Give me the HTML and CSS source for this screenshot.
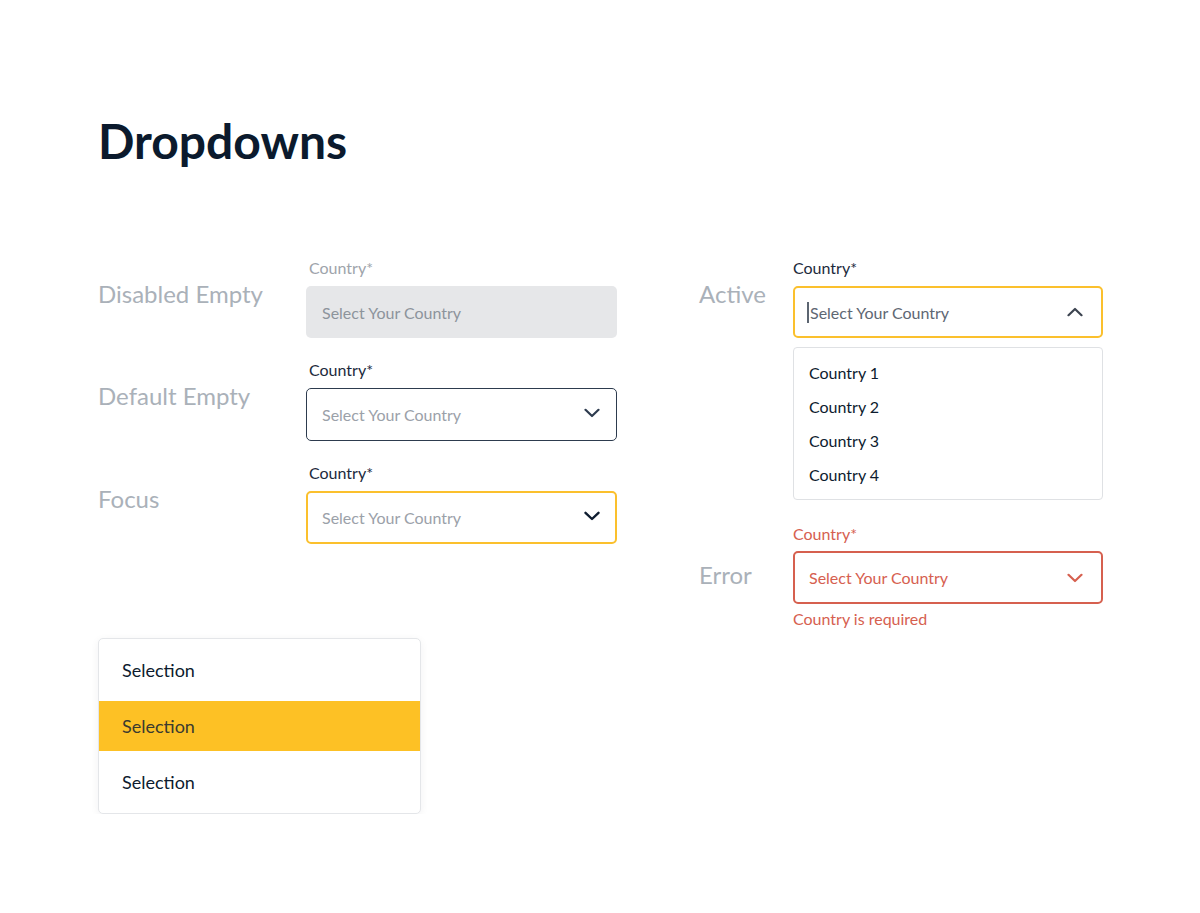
FILE: index.html
```html
<!DOCTYPE html>
<html lang="en">
<head>
<meta charset="utf-8">
<title>Dropdowns</title>
<link rel="stylesheet" href="styles.css">
</head>
<body>
<main class="page">
  <h1 class="title">Dropdowns</h1>
  <div class="columns">
    <section class="col col-left">
      <div class="row">
        <div class="row-label">Disabled Empty</div>
        <div class="field">
          <div class="field-label disabled">Country*</div>
          <div class="select select-disabled"><span class="ph">Select Your Country</span></div>
        </div>
      </div>
      <div class="row">
        <div class="row-label">Default Empty</div>
        <div class="field">
          <div class="field-label">Country*</div>
          <div class="select select-default">
            <span class="ph">Select Your Country</span>
            <svg class="chev" width="16" height="10" viewBox="0 0 16 10"><path d="M1.5 1.8 8 8 14.5 1.8" fill="none" stroke="#2d3b4e" stroke-width="2.2" stroke-linecap="round" stroke-linejoin="round"/></svg>
          </div>
        </div>
      </div>
      <div class="row">
        <div class="row-label">Focus</div>
        <div class="field">
          <div class="field-label">Country*</div>
          <div class="select select-focus">
            <span class="ph">Select Your Country</span>
            <svg class="chev" width="16" height="10" viewBox="0 0 16 10"><path d="M1.5 1.8 8 8 14.5 1.8" fill="none" stroke="#0f1d30" stroke-width="2.4" stroke-linecap="round" stroke-linejoin="round"/></svg>
          </div>
        </div>
      </div>
      <ul class="menu">
        <li class="menu-item">Selection</li>
        <li class="menu-item selected">Selection</li>
        <li class="menu-item">Selection</li>
      </ul>
    </section>
    <section class="col col-right">
      <div class="row row-right">
        <div class="row-label label-active">Active</div>
        <div class="field">
          <div class="field-label">Country*</div>
          <div class="select select-active">
            <span class="caret"></span><span class="ph ph-active">Select Your Country</span>
            <svg class="chev" width="16" height="10" viewBox="0 0 16 10"><path d="M1.5 8.2 8 2 14.5 8.2" fill="none" stroke="#3c4450" stroke-width="2.2" stroke-linecap="round" stroke-linejoin="round"/></svg>
          </div>
          <ul class="options">
            <li>Country 1</li>
            <li>Country 2</li>
            <li>Country 3</li>
            <li>Country 4</li>
          </ul>
        </div>
      </div>
      <div class="row row-right">
        <div class="row-label label-error">Error</div>
        <div class="field">
          <div class="field-label error">Country*</div>
          <div class="select select-error">
            <span class="ph ph-error">Select Your Country</span>
            <svg class="chev" width="16" height="10" viewBox="0 0 16 10"><path d="M1.5 1.8 8 8 14.5 1.8" fill="none" stroke="#d6604f" stroke-width="2.2" stroke-linecap="round" stroke-linejoin="round"/></svg>
          </div>
          <div class="helper">Country is required</div>
        </div>
      </div>
    </section>
  </div>
</main>
</body>
</html>
```
FILE: styles.css
```css
* { box-sizing: border-box; }
html, body { margin: 0; padding: 0; background: #ffffff; }
body {
  font-family: Lato, "Open Sans", "Liberation Sans", sans-serif;
  color: #0d1b2e;
}
.page {
  padding: 106px 0 0 98px;
}
.title {
  margin: 0;
  font-size: 48px;
  line-height: 70px;
  font-weight: 700;
  color: #0b1a2d;
}
.columns {
  display: flex;
  gap: 82px;
  margin-top: 83px;
}
.col { display: flex; flex-direction: column; }
.col-left { width: 519px; gap: 23px; }
.col-right { width: 404px; gap: 25px; }
.row { display: flex; }
.row-label {
  width: 208px;
  flex: none;
  padding-top: 21px;
  font-size: 24px;
  line-height: 28px;
  color: #aab1b9;
}
.row-right .row-label { width: 94px; }
.label-error { padding-top: 36px; }
.field { width: 311px; display: flex; flex-direction: column; }
.field-label {
  padding-left: 3px;
  font-size: 16px;
  line-height: 18px;
  color: #1c2a3c;
  margin-bottom: 9px;
}
.row-right .field-label { padding-left: 0; }
.field-label.disabled { color: #9ea4ab; }
.field-label.error { color: #d6604f; margin-bottom: 8px; }
.select {
  height: 52px;
  border-radius: 5px;
  display: flex;
  align-items: center;
  padding: 0 16px 0 16px;
}
.ph {
  font-size: 16px;
  color: #9ba1a9;
  flex: 1;
}
.select-disabled { background: #e6e7e9; }
.select-disabled .ph { color: #8d949c; }
.select-default { border: 1px solid #2d3b4e; height: 53px; padding-left: 15px; }
.select-focus { border: 2px solid #fbc02d; height: 53px; padding-left: 14px; padding-right: 15px; }
.select-active { border: 2px solid #fbc02d; padding-left: 12px; padding-right: 18px; }
.select-error { border: 2px solid #d6604f; height: 53px; padding-left: 14px; padding-right: 18px; }
.chev { flex: none; display: block; }
.select-focus .chev, .select-default .chev { margin-top: -4px; }
.caret {
  width: 2px;
  height: 21px;
  background: #5c6571;
  margin-right: 1px;
  flex: none;
}
.ph-active { color: #5e6773; }
.ph-error { color: #d6604f; }
.options {
  list-style: none;
  margin: 9px 0 0 0;
  padding: 8px 0 7px 15px;
  border: 1px solid #dfe1e4;
  border-radius: 4px;
  height: 153px;
}
.options li {
  font-size: 16px;
  line-height: 34px;
  color: #0d1b2e;
}
.helper {
  margin-top: 6px;
  font-size: 16px;
  line-height: 18px;
  color: #d6604f;
}
.menu {
  list-style: none;
  margin: 71px 0 0 0;
  padding: 0;
  width: 323px;
  border: 1px solid #e4e6e9;
  border-radius: 5px;
  box-shadow: 0 2px 8px rgba(20, 30, 50, 0.06);
  background: #fff;
  overflow: hidden;
}
.menu-item {
  height: 50px;
  display: flex;
  align-items: center;
  padding-left: 23px;
  font-size: 18px;
  color: #0d1b2e;
}
.menu-item:first-child, .menu-item:last-child { height: 62px; }
.menu-item.selected {
  background: #fdc125;
  color: #3a3a30;
}
```
